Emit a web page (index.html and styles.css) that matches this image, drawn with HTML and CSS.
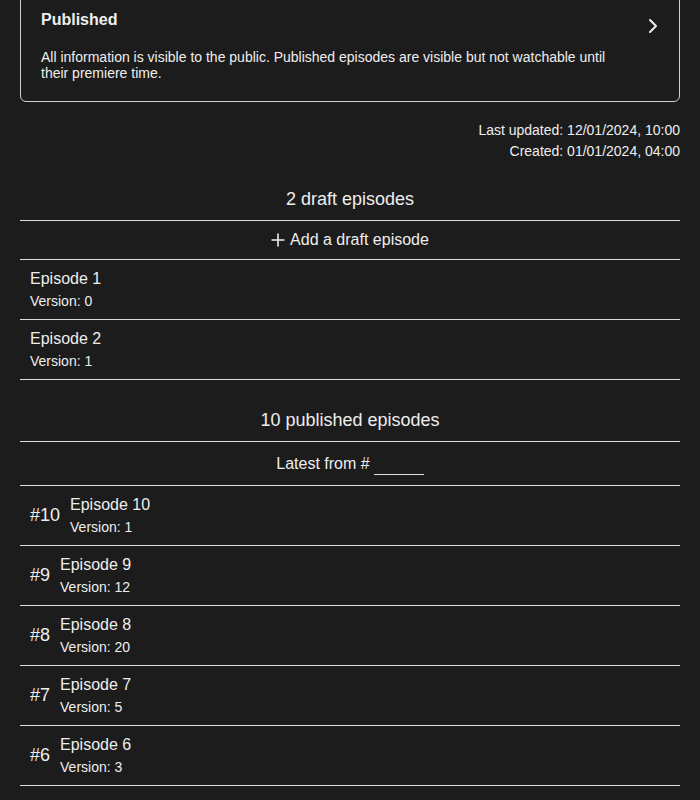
FILE: index.html
```html
<!DOCTYPE html>
<html lang="en">
<head>
<meta charset="utf-8">
<title>Series</title>
<link rel="stylesheet" href="styles.css">
</head>
<body>
<main class="page">
  <section class="status-card">
    <div class="status-body">
      <div class="status-title">Published</div>
      <p class="status-desc">All information is visible to the public. Published episodes are visible but not watchable until their premiere time.</p>
    </div>
    <svg class="chevron" width="10" height="16" viewBox="0 0 10 16" aria-hidden="true"><polyline points="2,2 8,8 2,14" fill="none" stroke="#eeeeee" stroke-width="2" stroke-linecap="round" stroke-linejoin="round"/></svg>
  </section>

  <div class="meta">
    <div>Last updated: 12/01/2024, 10:00</div>
    <div>Created: 01/01/2024, 04:00</div>
  </div>

  <section class="episodes drafts">
    <h2 class="episodes-heading">2 draft episodes</h2>
    <div class="add-row">
      <svg class="plus" width="14" height="14" viewBox="0 0 14 14" aria-hidden="true"><path d="M7 0.5V13.5M0.5 7H13.5" stroke="#eeeeee" stroke-width="1.6" fill="none"/></svg>
      <span>Add a draft episode</span>
    </div>
    <div class="ep-row">
      <div class="ep-info">
        <div class="ep-title">Episode 1</div>
        <div class="ep-version">Version: 0</div>
      </div>
    </div>
    <div class="ep-row">
      <div class="ep-info">
        <div class="ep-title">Episode 2</div>
        <div class="ep-version">Version: 1</div>
      </div>
    </div>
  </section>

  <section class="episodes published">
    <h2 class="episodes-heading">10 published episodes</h2>
    <div class="filter-row">
      <label for="from">Latest from #</label>
      <input id="from" class="from-input" type="text">
    </div>
    <div class="ep-row">
      <div class="ep-num">#10</div>
      <div class="ep-info">
        <div class="ep-title">Episode 10</div>
        <div class="ep-version">Version: 1</div>
      </div>
    </div>
    <div class="ep-row">
      <div class="ep-num">#9</div>
      <div class="ep-info">
        <div class="ep-title">Episode 9</div>
        <div class="ep-version">Version: 12</div>
      </div>
    </div>
    <div class="ep-row">
      <div class="ep-num">#8</div>
      <div class="ep-info">
        <div class="ep-title">Episode 8</div>
        <div class="ep-version">Version: 20</div>
      </div>
    </div>
    <div class="ep-row">
      <div class="ep-num">#7</div>
      <div class="ep-info">
        <div class="ep-title">Episode 7</div>
        <div class="ep-version">Version: 5</div>
      </div>
    </div>
    <div class="ep-row">
      <div class="ep-num">#6</div>
      <div class="ep-info">
        <div class="ep-title">Episode 6</div>
        <div class="ep-version">Version: 3</div>
      </div>
    </div>
  </section>
</main>
</body>
</html>
```
FILE: styles.css
```css
html, body {
  margin: 0;
  padding: 0;
  background: #1c1c1c;
}

body {
  font-family: "Liberation Sans", Arial, sans-serif;
  color: #eeeeee;
}

.page {
  padding: 0 20px 40px;
}

.status-card {
  margin-top: -10px;
  display: flex;
  align-items: flex-start;
  gap: 32px;
  padding: 20px;
  border: 1px solid #cfcfcf;
  border-radius: 6px;
}

.status-body {
  flex: 1;
  min-width: 0;
}

.status-title {
  font-size: 16px;
  line-height: 18px;
  font-weight: bold;
}

.status-desc {
  margin: 20px 0 0;
  font-size: 14px;
  line-height: 16px;
}

.chevron {
  flex: none;
  margin-top: 7px;
  margin-right: 1px;
}

.meta {
  margin-top: 18px;
  text-align: right;
  font-size: 14px;
  line-height: 21px;
}

.episodes {
  margin-top: 17px;
}

.published {
  margin-top: 20px;
}

.episodes-heading {
  margin: 0;
  padding: 10px 0;
  font-size: 18px;
  line-height: 21px;
  font-weight: normal;
  text-align: center;
  border-bottom: 1px solid #dddddd;
}

.add-row {
  display: flex;
  align-items: center;
  justify-content: center;
  gap: 5px;
  padding: 10px 0;
  font-size: 16px;
  line-height: 18px;
  border-bottom: 1px solid #dddddd;
}

.filter-row {
  display: flex;
  align-items: center;
  justify-content: center;
  gap: 4px;
  padding: 10px 0;
  font-size: 16px;
  line-height: 23px;
  border-bottom: 1px solid #dddddd;
}

.from-input {
  box-sizing: border-box;
  width: 50px;
  height: 23px;
  padding: 0;
  margin: 0;
  border: none;
  border-bottom: 1px solid #dddddd;
  background: transparent;
  color: #eeeeee;
  font: inherit;
  outline: none;
}

.ep-row {
  display: flex;
  align-items: center;
  gap: 10px;
  padding: 10px 10px 10px;
  border-bottom: 1px solid #dddddd;
}

.ep-num {
  font-size: 18px;
  line-height: 21px;
}

.ep-info {
  display: flex;
  flex-direction: column;
  gap: 5px;
}

.ep-title {
  font-size: 16px;
  line-height: 18px;
}

.ep-version {
  font-size: 14px;
  line-height: 16px;
}
```
